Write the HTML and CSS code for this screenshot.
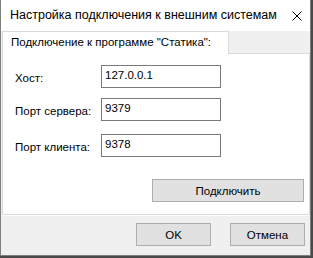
FILE: index.html
```html
<!DOCTYPE html>
<html lang="ru">
<head>
<meta charset="utf-8">
<link rel="stylesheet" href="styles.css">
</head>
<body>
<div class="window">
  <div class="titlebar">
    <span class="title">Настройка подключения к внешним системам</span>
    <svg class="close" width="10" height="10" viewBox="0 0 10 10"><path d="M0.5 0.5 L9.5 9.5 M9.5 0.5 L0.5 9.5" stroke="#000" stroke-width="1" fill="none"/></svg>
  </div>
  <div class="client">
    <div class="tabstrip">
      <div class="tab">Подключение к программе "Статика":</div>
    </div>
    <div class="panel">
      <div class="form">
        <label class="lbl r1">Хост:</label>
        <div class="input r1">127.0.0.1</div>
        <label class="lbl r2">Порт сервера:</label>
        <div class="input r2">9379</div>
        <label class="lbl r3">Порт клиента:</label>
        <div class="input r3">9378</div>
      </div>
      <div class="connect-row">
        <div class="btn connect">Подключить</div>
      </div>
    </div>
    <div class="footer">
      <div class="btn ok">OK</div>
      <div class="btn cancel">Отмена</div>
    </div>
  </div>
</div>
</body>
</html>
```
FILE: styles.css
```css
html, body {
  margin: 0;
  padding: 0;
}
body {
  width: 313px;
  height: 258px;
  background: #4a4a4a;
  font-family: "Liberation Sans", Arial, sans-serif;
  font-size: 11.5px;
  color: #000;
  overflow: hidden;
}
.window {
  box-sizing: border-box;
  width: 311px;
  height: 256px;
  border-left: 1px solid #7f7f7f;
  border-right: 1px solid #7f7f7f;
  border-bottom: 1px solid #7f7f7f;
  background: #f0f0f0;
  display: flex;
  flex-direction: column;
}
.titlebar {
  height: 31px;
  background: #fff;
  display: flex;
  align-items: center;
  padding-left: 9px;
  padding-right: 8px;
  flex: none;
}
.title {
  flex: 1;
  font-size: 12.5px;
  padding-bottom: 1px;
}
.close {
  display: block;
}
.client {
  flex: 1;
  display: flex;
  flex-direction: column;
  padding: 0 0 0 1px;
}
.tabstrip {
  height: 22px;
  display: flex;
  align-items: flex-end;
  flex: none;
}
.tab {
  box-sizing: border-box;
  width: 227px;
  height: 23px;
  margin-bottom: -1px;
  background: #fff;
  border: 1px solid #d9d9d9;
  border-bottom: none;
  padding: 4px 0 0 8px;
  position: relative;
  z-index: 1;
}
.panel {
  box-sizing: border-box;
  width: 308px;
  height: 162px;
  background: #fff;
  border: 1px solid #d9d9d9;
  display: flex;
  flex-direction: column;
  flex: none;
}
.form {
  display: grid;
  grid-template-columns: 86px 120px;
  padding: 11px 0 0 12px;
  align-items: center;
}
.lbl {
  padding-top: 3px;
}
.r2 { margin-top: 10px; }
.r3 { margin-top: 13px; }
.input {
  box-sizing: border-box;
  height: 23px;
  border: 1px solid #7a7a7a;
  padding: 3px 0 0 3px;
  background: #fff;
}
.connect-row {
  display: flex;
  justify-content: flex-end;
  padding: 22px 5px 0 0;
}
.btn {
  box-sizing: border-box;
  height: 23px;
  background: #e1e1e1;
  border: 1px solid #adadad;
  display: flex;
  align-items: center;
  justify-content: center;
}
.connect {
  width: 152px;
}
.footer {
  flex: 1;
  border-top: 1px solid #fcfcfc;
  display: flex;
  justify-content: flex-end;
  align-items: flex-start;
  padding: 7px 5px 0 0;
  gap: 19px;
}
.ok, .cancel {
  width: 75px;
}
```
